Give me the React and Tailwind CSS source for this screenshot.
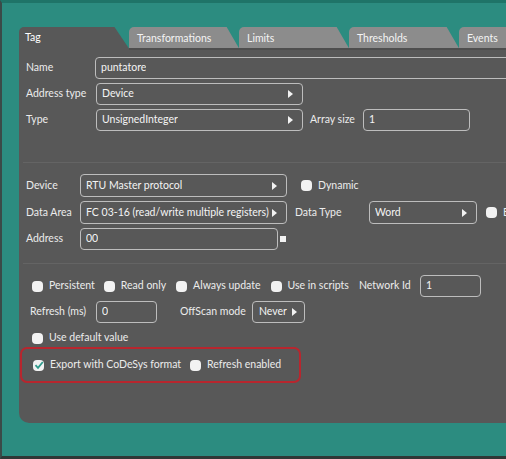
import React from "react";

const font = { fontFamily: "Lato, 'Open Sans', sans-serif" };

function Arrow() {
  return (
    <svg width="5" height="8" viewBox="0 0 5 8" className="shrink-0">
      <path d="M0 0 L5 4 L0 8 Z" fill="#f2f2f2" />
    </svg>
  );
}

function Field({ value, w, arrow, h = "h-[22px]" }) {
  return (
    <div
      className={`${w} ${h} shrink-0 flex items-center justify-between gap-[2px] pl-[5px] pr-[9px] rounded-[4px] border-[1.5px] border-[#bdbdbd] text-[#f4f4f4]`}
    >
      <span className="overflow-hidden whitespace-nowrap">{value}</span>
      {arrow && <Arrow />}
    </div>
  );
}

function Check({ label, checked }) {
  return (
    <div className="flex items-center gap-[6px] shrink-0">
      <div className="w-[11px] h-[11px] rounded-[4px] bg-[#f2f2f2] flex items-center justify-center">
        {checked && (
          <svg width="10" height="10" viewBox="0 0 10 10">
            <path d="M1.5 5.2 L4 7.8 L8.8 2" stroke="#2f9a8b" strokeWidth="1.8" fill="none" />
          </svg>
        )}
      </div>
      {label && <span>{label}</span>}
    </div>
  );
}

const tabs = ["Transformations", "Limits", "Thresholds", "Events"];

export default function App() {
  return (
    <div
      style={font}
      className="w-[506px] h-[459px] overflow-hidden bg-[#2c8c80] border-l-2 border-t-[3px] border-b-[3px] border-l-[#3b4a48] border-t-[#1f7468] border-b-[#2f3836] pl-[17px] pt-[24px] text-[10.5px] text-[#ececec]"
    >
      {/* tabs */}
      <div className="flex h-[23px] w-[560px]">
        <div className="w-[111px] pl-[6px] pt-[3px] bg-[#585858] rounded-tl-[5px] [clip-path:polygon(0_0,86%_0,100%_100%,0_100%)] text-white">
          Tag
        </div>
        {tabs.map((t) => (
          <div
            key={t}
            className="w-[111px] -ml-[1px] pl-[8px] pt-[4px] bg-[#8c8c8c] rounded-tl-[5px] border-b-2 border-[#4e4e4e] [clip-path:polygon(0_0,88%_0,100%_100%,0_100%)] text-[#f4f4f4]"
          >
            {t}
          </div>
        ))}
      </div>

      {/* panel */}
      <div className="w-[560px] h-[373px] bg-[#585858] rounded-bl-[10px] flex flex-col pt-[7px]">
        {/* section 1 */}
        <div className="flex flex-col gap-1 pl-[7px]">
          <div className="flex items-center h-[22px]">
            <span className="w-[69px]">Name</span>
            <Field value="puntatore" w="w-[460px]" />
          </div>
          <div className="flex items-center h-[22px]">
            <span className="w-[70px]">Address type</span>
            <Field value="Device" w="w-[207px]" arrow />
          </div>
          <div className="flex items-center h-[22px]">
            <span className="w-[70px]">Type</span>
            <Field value="UnsignedInteger" w="w-[207px]" arrow />
            <span className="ml-[7px] w-[53px]">Array size</span>
            <Field value="1" w="w-[107px]" />
          </div>
        </div>

        <div className="mt-[31px] ml-[4px] border-t border-[#646464]" />

        {/* section 2 */}
        <div className="flex flex-col gap-1 pl-[7px] mt-[11px]">
          <div className="flex items-center h-[23px]">
            <span className="w-[54px]">Device</span>
            <Field value="RTU Master protocol" w="w-[207px]" h="h-[23px]" arrow />
            <div className="ml-[14px]">
              <Check label="Dynamic" />
            </div>
          </div>
          <div className="flex items-center h-[23px]">
            <span className="w-[54px]">Data Area</span>
            <Field value="FC 03-16 (read/write multiple registers)" w="w-[207px]" h="h-[23px]" arrow />
            <span className="ml-[8px] w-[74px]">Data Type</span>
            <Field value="Word" w="w-[108px]" h="h-[23px]" arrow />
            <div className="ml-[9px]">
              <Check label="Bit" />
            </div>
          </div>
          <div className="flex items-center h-[22px]">
            <span className="w-[54px]">Address</span>
            <Field value="00" w="w-[198px]" />
            <div className="ml-[2px] w-[6px] h-[6px] bg-[#f2f2f2]" />
          </div>
        </div>

        <div className="mt-[13px] ml-[4px] border-t border-[#646464]" />

        {/* section 3 */}
        <div className="flex flex-col mt-[11px]">
          <div className="flex items-center h-[22px] pl-[13px]">
            <Check label="Persistent" />
            <div className="ml-[9px]">
              <Check label="Read only" />
            </div>
            <div className="ml-[10px]">
              <Check label="Always update" />
            </div>
            <div className="ml-[10px]">
              <Check label="Use in scripts" />
            </div>
            <span className="ml-[10px] w-[61px]">Network Id</span>
            <Field value="1" w="w-[61px]" />
          </div>
          <div className="flex items-center h-[22px] mt-1 pl-[11px]">
            <span className="w-[66px]">Refresh (ms)</span>
            <Field value="0" w="w-[61px]" />
            <span className="ml-[23px] w-[72px]">OffScan mode</span>
            <div className="h-[22px] w-[53px] flex items-center gap-[5px] pl-[6px] rounded-[4px] border-[1.5px] border-[#bdbdbd] text-[#f4f4f4]">
              <span>Never</span>
              <Arrow />
            </div>
          </div>
          <div className="flex items-center h-[16px] mt-[7px] pl-[13px]">
            <Check label="Use default value" />
          </div>
          <div className="ml-[1px] mt-[1px] w-[281px] h-[36px] rounded-[7px] border-2 border-[#b8262e] flex items-center pl-[11px] gap-[9px]">
            <Check label="Export with CoDeSys format" checked />
            <Check label="Refresh enabled" />
          </div>
        </div>
      </div>
    </div>
  );
}
